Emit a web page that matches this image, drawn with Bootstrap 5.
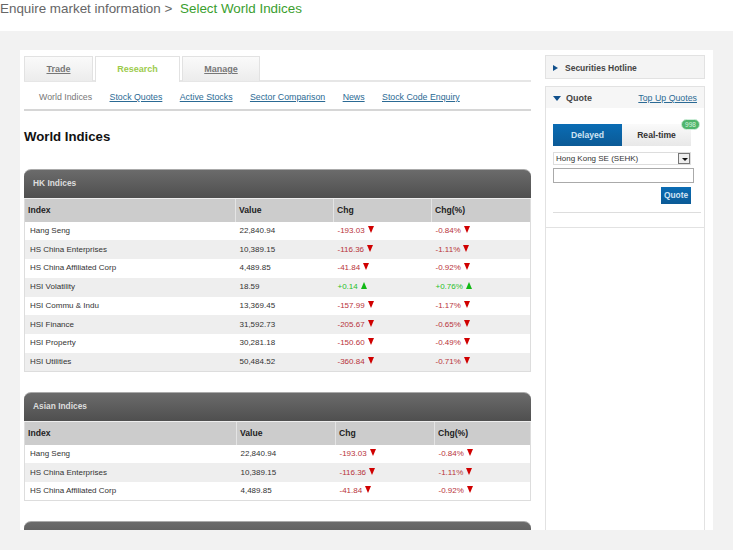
<!DOCTYPE html>
<html lang="en"><head><meta charset="utf-8"><title>World Indices</title>
<link href="https://cdn.jsdelivr.net/npm/bootstrap@5.3.0/dist/css/bootstrap.min.css" rel="stylesheet">
<style>
html,body{height:550px;overflow:hidden}
body{background:#f2f2f2;font-family:"Liberation Sans",Arial,sans-serif;color:#333;font-size:9px}
a{color:#2b6a94}
.crumb{background:#fff;height:31px;font-size:13.4px;line-height:17px;color:#666;white-space:nowrap}
.crumb b{font-weight:400;color:#3a9e2e;margin-left:4px}
.sheet{background:#fff;width:693px;height:480px;margin:19px 0 0 20px;overflow:hidden}
.mainp{width:507px;margin:6px 0 0 4px;flex:none}
.sidep{width:160px;margin:5px 0 0 14px;flex:none}
.tabz{height:26px;border-bottom:2px solid #e6e6e6;gap:2px;flex-wrap:nowrap}
.tabz .nav-link{height:25px;padding:0;margin:0;border:1px solid #e2e2e2;border-bottom:0;border-radius:0;font-size:9px;font-weight:700;line-height:25px;text-align:center;color:#777;text-decoration:underline;background:linear-gradient(#fafafa,#ececec)}
.tabz .nav-link.active{height:26px;background:#fff;color:#9ccb4b;text-decoration:none;border-color:#e2e2e2}
.t1{width:69px}.t2{width:85px}.t3{width:78px}
.subn{height:29px;border-bottom:2px solid #d6d6d6;padding-left:15px;gap:17.4px;align-items:center;white-space:nowrap;font-size:8.8px;padding-top:4px}
.subn span{color:#777}
.ttl{font-size:13.2px;font-weight:700;color:#111;margin:18px 0 24px;line-height:16px}
.blk{margin-bottom:20px}
.blkh{height:29px;background:linear-gradient(#6b6b6b,#4f4f4f);border-top:1px solid #aaa;border-radius:7px 7px 0 0;color:#ddd;font-weight:700;font-size:8.4px;line-height:26px;padding-left:9px}
.dat{table-layout:fixed;width:507px;margin:0;border-left:1px solid #ddd;border-right:1px solid #ddd;border-bottom:1px solid #ddd;font-size:8px;--bs-table-bg:transparent}
.dat th{background:#ccc;height:23px;padding:0 0 0 3px;font-size:8.6px;color:#222;border:0;border-left:1px solid #e4e4e4;border-top:1px solid #eee;vertical-align:middle}
.dat th:first-child{border-left:0}
.dat td{height:18.75px;padding:0 0 0 4px;border:0;vertical-align:middle;color:#333;white-space:nowrap;line-height:10px}
.dat td:first-child{padding-left:5px}
.dat tr:nth-child(even) td{background:#eee}
.dat .dn{color:#b8333a}.dat .up{color:#28c028}
.tri{display:inline-block;width:0;height:0;border-left:3px solid transparent;border-right:3px solid transparent;margin-left:3px;vertical-align:0}
.dn .tri{border-top:7px solid #d00000}
.up .tri{border-bottom:7px solid #10b814}
.hot{height:24px;border:1px solid #e2e2e2;background:#f4f4f4;font-weight:700;font-size:8.5px;color:#444;padding:2px 0 0 7px;gap:7px;align-items:center}
.arr{width:0;height:0;border-top:3.5px solid transparent;border-bottom:3.5px solid transparent;border-left:5px solid #11508c;flex:none}
.arr.dwn{border-left:4px solid transparent;border-right:4px solid transparent;border-top:5px solid #11508c;border-bottom:0}
.qbox{margin-top:7px;height:460px;border:1px solid #e2e2e2;border-bottom:0;position:relative}
.qhead{height:21px;background:#f6f6f6;padding:2px 7px 0 7px;align-items:center;font-size:8.8px;gap:5px}
.qhead strong{color:#444;font-size:9px}
.qtabs{margin:16px 0 0 7px;width:138px;height:22px;position:relative}
.qtabs>div{line-height:22px;text-align:center;font-weight:700;font-size:8.6px}
.qa{width:69px;background:linear-gradient(#0a6cb4,#0b5a96);color:#cfe3f3}
.qb{width:69px;background:linear-gradient(#fafafa,#e8e8e8);color:#333}
.cnt{position:absolute;right:-9px;top:-5px;width:19px;height:11px;border-radius:6px;background:#4fb56c;border:1px solid #cfeeda;color:#d6f3df;font-size:6.5px;line-height:9px;text-align:center}
.fsel{margin:6px 0 0 7px;width:138px;height:13px;border:1px solid #ddd;font-size:8px;line-height:11px;padding-left:2px;position:relative;color:#333}
.fsel i{position:absolute;right:0;top:0;width:12px;height:11px;border:1px solid #777;background:#eee}
.fsel i::after{content:"";position:absolute;left:2.5px;top:4px;border-left:3px solid transparent;border-right:3px solid transparent;border-top:3px solid #111}
.finp{display:block;margin:3px 0 0 7px;width:141px;height:15px;border:1px solid #aaa;border-radius:0;padding:0}
.qbtn{display:block;margin:4px 0 0 115px;width:30px;height:17px;padding:0;border:0;border-radius:0;background:linear-gradient(#0a6cb4,#0b5a96);color:#cfe3f3;font-size:8.4px;font-weight:700}
.rule1{height:1px;background:#ddd;margin:8px 3px 0 7px}
.rule2{height:1px;background:#e2e2e2;margin-top:14px}
</style></head><body>
<div class="crumb">Enquire market information &gt; <b>Select World Indices</b></div>
<div class="sheet d-flex">
 <div class="mainp">
  <ul class="nav tabz">
   <li class="nav-item t1"><a class="nav-link" href="#">Trade</a></li>
   <li class="nav-item t2"><a class="nav-link active" href="#">Research</a></li>
   <li class="nav-item t3"><a class="nav-link" href="#">Manage</a></li>
  </ul>
  <div class="subn d-flex"><span>World Indices</span><a href="#">Stock Quotes</a><a href="#">Active Stocks</a><a href="#">Sector Comparison</a><a href="#">News</a><a href="#">Stock Code Enquiry</a></div>
  <h1 class="ttl">World Indices</h1>

  <div class="blk"><div class="blkh">HK Indices</div>
  <table class="table dat"><colgroup><col style="width:211px"><col style="width:98px"><col style="width:98px"><col></colgroup>
  <thead><tr><th>Index</th><th>Value</th><th>Chg</th><th>Chg(%)</th></tr></thead><tbody>
  <tr><td>Hang Seng</td><td>22,840.94</td><td class="dn">-193.03<i class="tri"></i></td><td class="dn">-0.84%<i class="tri"></i></td></tr>
  <tr><td>HS China Enterprises</td><td>10,389.15</td><td class="dn">-116.36<i class="tri"></i></td><td class="dn">-1.11%<i class="tri"></i></td></tr>
  <tr><td>HS China Affiliated Corp</td><td>4,489.85</td><td class="dn">-41.84<i class="tri"></i></td><td class="dn">-0.92%<i class="tri"></i></td></tr>
  <tr><td>HSI Volatility</td><td>18.59</td><td class="up">+0.14<i class="tri"></i></td><td class="up">+0.76%<i class="tri"></i></td></tr>
  <tr><td>HSI Commu &amp; Indu</td><td>13,369.45</td><td class="dn">-157.99<i class="tri"></i></td><td class="dn">-1.17%<i class="tri"></i></td></tr>
  <tr><td>HSI Finance</td><td>31,592.73</td><td class="dn">-205.67<i class="tri"></i></td><td class="dn">-0.65%<i class="tri"></i></td></tr>
  <tr><td>HSI Property</td><td>30,281.18</td><td class="dn">-150.60<i class="tri"></i></td><td class="dn">-0.49%<i class="tri"></i></td></tr>
  <tr><td>HSI Utilities</td><td>50,484.52</td><td class="dn">-360.84<i class="tri"></i></td><td class="dn">-0.71%<i class="tri"></i></td></tr>
  </tbody></table></div>

  <div class="blk"><div class="blkh">Asian Indices</div>
  <table class="table dat"><colgroup><col style="width:212px"><col style="width:99px"><col style="width:99px"><col></colgroup>
  <thead><tr><th>Index</th><th>Value</th><th>Chg</th><th>Chg(%)</th></tr></thead><tbody>
  <tr><td>Hang Seng</td><td>22,840.94</td><td class="dn">-193.03<i class="tri"></i></td><td class="dn">-0.84%<i class="tri"></i></td></tr>
  <tr><td>HS China Enterprises</td><td>10,389.15</td><td class="dn">-116.36<i class="tri"></i></td><td class="dn">-1.11%<i class="tri"></i></td></tr>
  <tr><td>HS China Affiliated Corp</td><td>4,489.85</td><td class="dn">-41.84<i class="tri"></i></td><td class="dn">-0.92%<i class="tri"></i></td></tr>
  </tbody></table></div>

  <div class="blk"><div class="blkh"></div></div>
 </div>
 <div class="sidep">
  <div class="hot d-flex"><span class="arr"></span>Securities Hotline</div>
  <div class="qbox">
   <div class="qhead d-flex"><span class="arr dwn"></span><strong>Quote</strong><a class="ms-auto" href="#">Top Up Quotes</a></div>
   <div class="qtabs d-flex"><div class="qa">Delayed</div><div class="qb">Real-time</div><span class="cnt">998</span></div>
   <div class="fsel">Hong Kong SE (SEHK)<i></i></div>
   <input class="finp" type="text" aria-label="Code">
   <button class="btn qbtn" type="button">Quote</button>
   <div class="rule1"></div>
   <div class="rule2"></div>
  </div>
 </div>
</div>
</body></html>
